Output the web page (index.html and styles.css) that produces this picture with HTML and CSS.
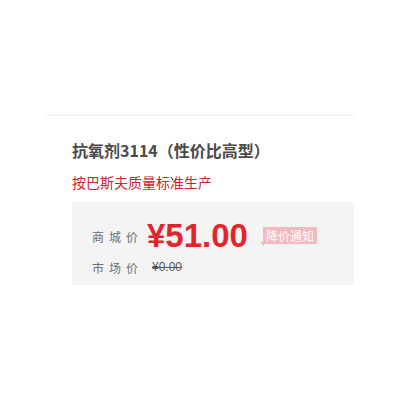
FILE: index.html
```html
<!DOCTYPE html>
<html lang="zh">
<head>
<meta charset="utf-8">
<link rel="stylesheet" href="styles.css">
</head>
<body>
<div class="card">
  <div class="info">
    <h1 class="title">抗氧剂3114（性价比高型）</h1>
    <p class="sub">按巴斯夫质量标准生产</p>
  </div>
  <div class="pricebox">
    <div class="row row-main">
      <span class="label">商城价</span>
      <span class="price">¥51.00</span>
      <span class="notify">降价通知</span>
    </div>
    <div class="row row-market">
      <span class="label">市场价</span>
      <span class="old">¥0.00</span>
    </div>
  </div>
</div>
</body>
</html>
```
FILE: styles.css
```css
html, body {
  margin: 0;
  padding: 0;
  background: #fff;
}
body {
  font-family: "Noto Sans CJK SC", "Liberation Sans", sans-serif;
}
.card {
  margin: 114px 0 0 46px;
  width: 308px;
  border-top: 2px solid #f4f4f4;
}
.info {
  padding: 22px 0 0 26px;
}
.title {
  margin: 0;
  font-size: 16px;
  line-height: 24px;
  font-weight: bold;
  color: #4a4a4a;
}
.sub {
  margin: 10px 0 0;
  font-size: 14px;
  line-height: 20px;
  color: #c9252d;
}
.pricebox {
  margin: 10px 0 0 26px;
  background: #f4f4f4;
  padding: 16px 0 8px 20px;
  height: 59px;
}
.row {
  display: flex;
  align-items: center;
}
.row-main {
  height: 36px;
}
.row-market {
  height: 20px;
  margin-top: 3px;
}
.label {
  font-size: 12px;
  letter-spacing: 5px;
  color: #6f6f6f;
  width: 55px;
}
.price {
  font-family: "Liberation Sans", sans-serif;
  font-weight: bold;
  font-size: 33px;
  line-height: 36px;
  color: #e3242b;
}
.notify {
  position: relative;
  margin-left: 15px;
  background: #f3b9be;
  color: #fff;
  font-size: 12px;
  line-height: 17px;
  height: 17px;
  padding: 0 3px;
  margin-top: -1px;
}
.notify::before {
  content: "";
  position: absolute;
  left: -3px;
  bottom: -2px;
  border-top: 4px solid #f3b9be;
  border-left: 4px solid transparent;
}
.old {
  font-family: "Liberation Sans", sans-serif;
  font-size: 12px;
  color: #555;
  text-decoration: line-through;
  margin-left: 5px;
}
```
